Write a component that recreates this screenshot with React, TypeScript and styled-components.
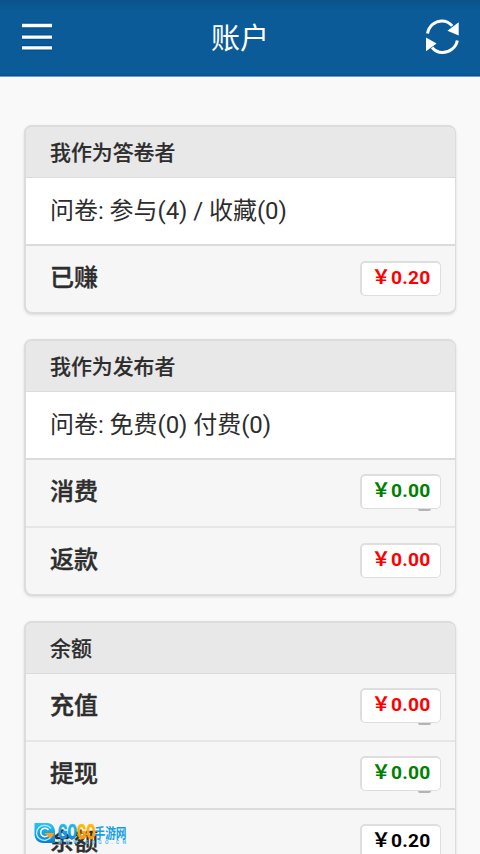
import React from "react";
import styled, { createGlobalStyle } from "styled-components";

const GlobalStyle = createGlobalStyle`
  * { box-sizing: border-box; }
  body {
    margin: 0;
    background: #f9f9f9;
    color: #2d2d2d;
    font-family: Roboto, "Noto Sans CJK SC", sans-serif;
  }
`;

const Screen = styled.div`
  position: relative;
  width: 480px;
  height: 854px;
  overflow: hidden;
  background: #f9f9f9;
`;

const TopBar = styled.header`
  display: flex;
  align-items: center;
  justify-content: space-between;
  height: 77px;
  padding: 0 20px 4px 22px;
  background: linear-gradient(#0b5288 0, #0a5894 6px, #0b5b98 12px, #0b5b98 73px, #055091 76px);
  border-bottom: 1px solid #6b9dc4;
`;

const IconButton = styled.button`
  display: flex;
  width: 34px;
  height: 36px;
  padding: 0;
  border: 0;
  background: none;
`;

const Title = styled.h1`
  margin: 0;
  padding-top: 6px;
  padding-right: 2px;
  color: #fff;
  font-size: 29px;
  font-weight: 400;
  line-height: 40px;
`;

const Content = styled.main`
  display: flex;
  flex-direction: column;
  gap: 25px;
  padding: 48px 24px 0;
`;

const Card = styled.section`
  flex: none;
  border: 2px solid #dcdcdc;
  border-right-width: 1px;
  border-radius: 8px;
  background: #f6f6f6;
  box-shadow: 0 1px 3px rgba(0, 0, 0, 0.12);
  overflow: hidden;
`;

const CardHeading = styled.h2`
  display: flex;
  align-items: center;
  height: 51px;
  margin: 0;
  padding: 0 24px 3px;
  background: #e8e8e8;
  border-bottom: 1px solid #dcdcdc;
  font-size: 20.9px;
  font-weight: 500;
  -webkit-text-stroke: 0.2px currentColor;
`;

const Summary = styled.p`
  display: flex;
  align-items: center;
  height: 66px;
  margin: 0;
  padding: 0 24px 5px;
  background: #fff;
  font-size: 24px;
  letter-spacing: -0.05px;
  white-space: pre;
`;

const Row = styled.div<{ $line?: "strong" | "soft" }>`
  display: flex;
  align-items: center;
  justify-content: space-between;
  height: ${({ $line }) => ($line ? 68 : 66)}px;
  padding: 0 14px 2px 24px;
  border-top: ${({ $line }) =>
    $line === "strong" ? "2px solid #dbdbdb" : $line === "soft" ? "2px solid #e6e6e6" : "0"};
`;

const Label = styled.span`
  padding-bottom: 5px;
  font-size: 24px;
  font-weight: 500;
  -webkit-text-stroke: 0.4px currentColor;
`;

const Amount = styled.span<{ $tone: string; $mark?: boolean; $raised?: boolean }>`
  position: relative;
  display: flex;
  align-items: center;
  justify-content: center;
  width: 81px;
  height: 35px;
  margin-bottom: ${({ $raised }) => ($raised ? 2 : 0)}px;
  padding-bottom: 1px;
  border: 1px solid #dedede;
  border-top-width: 2px;
  border-left-width: 2px;
  border-radius: 5px;
  background: #fff;
  color: ${({ $tone }) => $tone};
  font-size: 19.2px;
  font-weight: 700;
  line-height: 24px;
  letter-spacing: 0.2px;
  &::after {
    content: "";
    display: ${({ $mark }) => ($mark ? "block" : "none")};
    position: absolute;
    right: 9px;
    bottom: -3px;
    width: 13px;
    height: 2px;
    border-radius: 0 0 7px 7px;
    background: #b4b4b4;
  }
`;

const Watermark = styled.div`
  position: absolute;
  left: 34px;
  top: 822px;
  width: 96px;
  height: 24px;
`;

type Entry = {
  label: string;
  value: string;
  tone: string;
  mark?: boolean;
  raised?: boolean;
  line?: "strong" | "soft";
};
type Group = { title: string; summary?: string; rows: Entry[] };

const groups: Group[] = [
  {
    title: "我作为答卷者",
    summary: "问卷: 参与(4) / 收藏(0)",
    rows: [{ label: "已赚", value: "0.20", tone: "#ff0000", line: "strong" }],
  },
  {
    title: "我作为发布者",
    summary: "问卷: 免费(0) 付费(0)",
    rows: [
      { label: "消费", value: "0.00", tone: "#008000", mark: true, raised: true, line: "strong" },
      { label: "返款", value: "0.00", tone: "#ff0000", line: "soft" },
    ],
  },
  {
    title: "余额",
    rows: [
      { label: "充值", value: "0.00", tone: "#ff0000", mark: true, raised: true },
      { label: "提现", value: "0.00", tone: "#008000", mark: true, raised: true, line: "soft" },
      { label: "余额", value: "0.20", tone: "#000000", raised: true, line: "strong" },
    ],
  },
];

function MenuIcon() {
  return (
    <svg width="31" height="36" viewBox="0 0 31 36" fill="none">
      <path d="M0 7.5h30M0 19.2h30M0 29.8h30" stroke="#004f90" strokeWidth="6" />
      <path d="M0 7.5h30M0 19.2h30M0 29.8h30" stroke="#fff" strokeWidth="3.3" />
    </svg>
  );
}

function RefreshIcon() {
  return (
    <svg width="34" height="36" viewBox="0 0 34 36">
      <path
        d="M1.5 15.6C2.8 8 9 2.9 16 2.9c4 0 7.7 1.9 10.2 5M31.3 22.4C30 29.5 23.5 34.5 16.5 34.5c-4.2 0-7.8-1.8-10.4-5"
        fill="none"
        stroke="#fff"
        strokeWidth="3"
      />
      <path d="M32.7 4.2v13.4L21.4 12.8ZM0 33.2V19.6l10.6 5.8Z" fill="#fff" />
    </svg>
  );
}

function SiteMark() {
  return (
    <Watermark>
      <svg width="96" height="24" viewBox="0 0 96 24">
        <defs>
          <linearGradient id="markBlue" x1="0" y1="0" x2="0" y2="1">
            <stop offset="0" stopColor="#28c6f3" />
            <stop offset="1" stopColor="#087fd6" />
          </linearGradient>
          <linearGradient id="markGold" x1="0" y1="0" x2="0" y2="1">
            <stop offset="0" stopColor="#ffc400" />
            <stop offset="1" stopColor="#ff8a00" />
          </linearGradient>
        </defs>
        <path d="M.5 1h13C18 1 21 5 21 10v11H9C4 21 .5 17 .5 12Z" fill="url(#markBlue)" />
        <path d="M17 6.5a8 7.5 0 1 0 .5 8" fill="none" stroke="#bdeaff" strokeWidth="1.3" />
        <path d="M14.5 8a4.3 4.3 0 1 0-.5 5.5" fill="none" stroke="#fff" strokeWidth="1.5" />
        <path d="M10 11h10c-.4 3-2.2 4.7-5 5.2l-1-2.5Z" fill="#ff9f13" />
        <g fontFamily="Roboto, sans-serif" fontWeight="900" fontSize="19.5">
          <text x="24" y="16.7" textLength="19" lengthAdjust="spacingAndGlyphs" fill="url(#markBlue)" stroke="url(#markBlue)" strokeWidth=".4">GO</text>
          <text x="43" y="16.7" textLength="18.5" lengthAdjust="spacingAndGlyphs" fill="url(#markGold)" stroke="url(#markGold)" strokeWidth=".4">GO</text>
        </g>
        <text x="60.5" y="15.5" textLength="32" lengthAdjust="spacingAndGlyphs" fontFamily="Noto Sans CJK SC, sans-serif" fontWeight="700" fontSize="14" fill="#149fe5">手游网</text>
        <text x="24" y="21.8" textLength="68" fontFamily="Roboto, sans-serif" fontWeight="700" fontSize="5" fill="#53bdec">WWW.GOGO.CN</text>
      </svg>
    </Watermark>
  );
}

export default function App() {
  return (
    <Screen>
      <GlobalStyle />
      <TopBar>
        <IconButton aria-label="菜单"><MenuIcon /></IconButton>
        <Title>账户</Title>
        <IconButton aria-label="刷新"><RefreshIcon /></IconButton>
      </TopBar>
      <Content>
        {groups.map((group) => (
          <Card key={group.title}>
            <CardHeading>{group.title}</CardHeading>
            {group.summary && <Summary>{group.summary}</Summary>}
            {group.rows.map((row) => (
              <Row key={row.label} $line={row.line}>
                <Label>{row.label}</Label>
                <Amount $tone={row.tone} $mark={row.mark} $raised={row.raised}>{"\uFFE5"}{row.value}</Amount>
              </Row>
            ))}
          </Card>
        ))}
      </Content>
      <SiteMark />
    </Screen>
  );
}
